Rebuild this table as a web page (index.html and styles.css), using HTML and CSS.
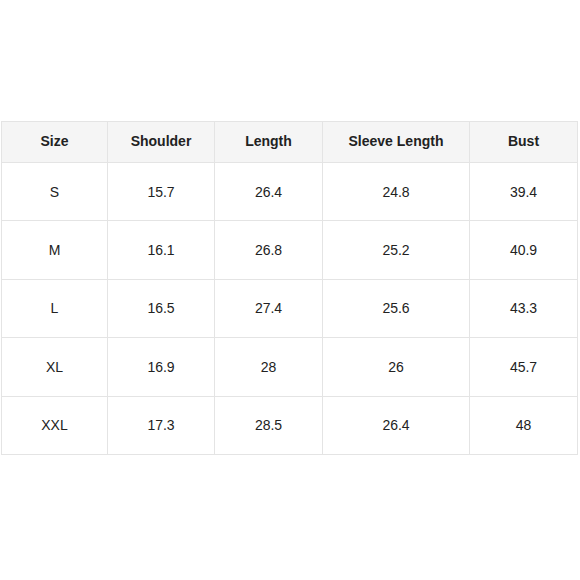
FILE: index.html
```html
<!DOCTYPE html>
<html>
<head>
<meta charset="utf-8">
<link rel="stylesheet" href="styles.css">
</head>
<body>
<div class="wrap">
<table class="size-table">
<colgroup>
<col class="c1"><col class="c2"><col class="c3"><col class="c4"><col class="c5">
</colgroup>
<thead>
<tr><th>Size</th><th>Shoulder</th><th>Length</th><th>Sleeve Length</th><th>Bust</th></tr>
</thead>
<tbody>
<tr><td>S</td><td>15.7</td><td>26.4</td><td>24.8</td><td>39.4</td></tr>
<tr><td>M</td><td>16.1</td><td>26.8</td><td>25.2</td><td>40.9</td></tr>
<tr><td>L</td><td>16.5</td><td>27.4</td><td>25.6</td><td>43.3</td></tr>
<tr><td>XL</td><td>16.9</td><td>28</td><td>26</td><td>45.7</td></tr>
<tr><td>XXL</td><td>17.3</td><td>28.5</td><td>26.4</td><td>48</td></tr>
</tbody>
</table>
</div>
</body>
</html>
```
FILE: styles.css
```css
html, body {
  margin: 0;
  padding: 0;
  background: #fff;
}
.wrap {
  padding: 121px 0 0 1px;
}
.size-table {
  border-collapse: collapse;
  table-layout: fixed;
  width: 576px;
  font-family: "Liberation Sans", Arial, sans-serif;
  font-size: 14px;
  color: #222;
}
.c1 { width: 106px; }
.c2 { width: 107px; }
.c3 { width: 108px; }
.c4 { width: 147px; }
.c5 { width: 108px; }
.size-table th, .size-table td {
  border: 1px solid #e4e4e4;
  text-align: center;
  vertical-align: middle;
  padding: 0;
}
.size-table th {
  background: #f5f5f5;
  font-weight: bold;
  height: 38px;
  padding-bottom: 2px;
}
.size-table td {
  height: 57.4px;
}
```
